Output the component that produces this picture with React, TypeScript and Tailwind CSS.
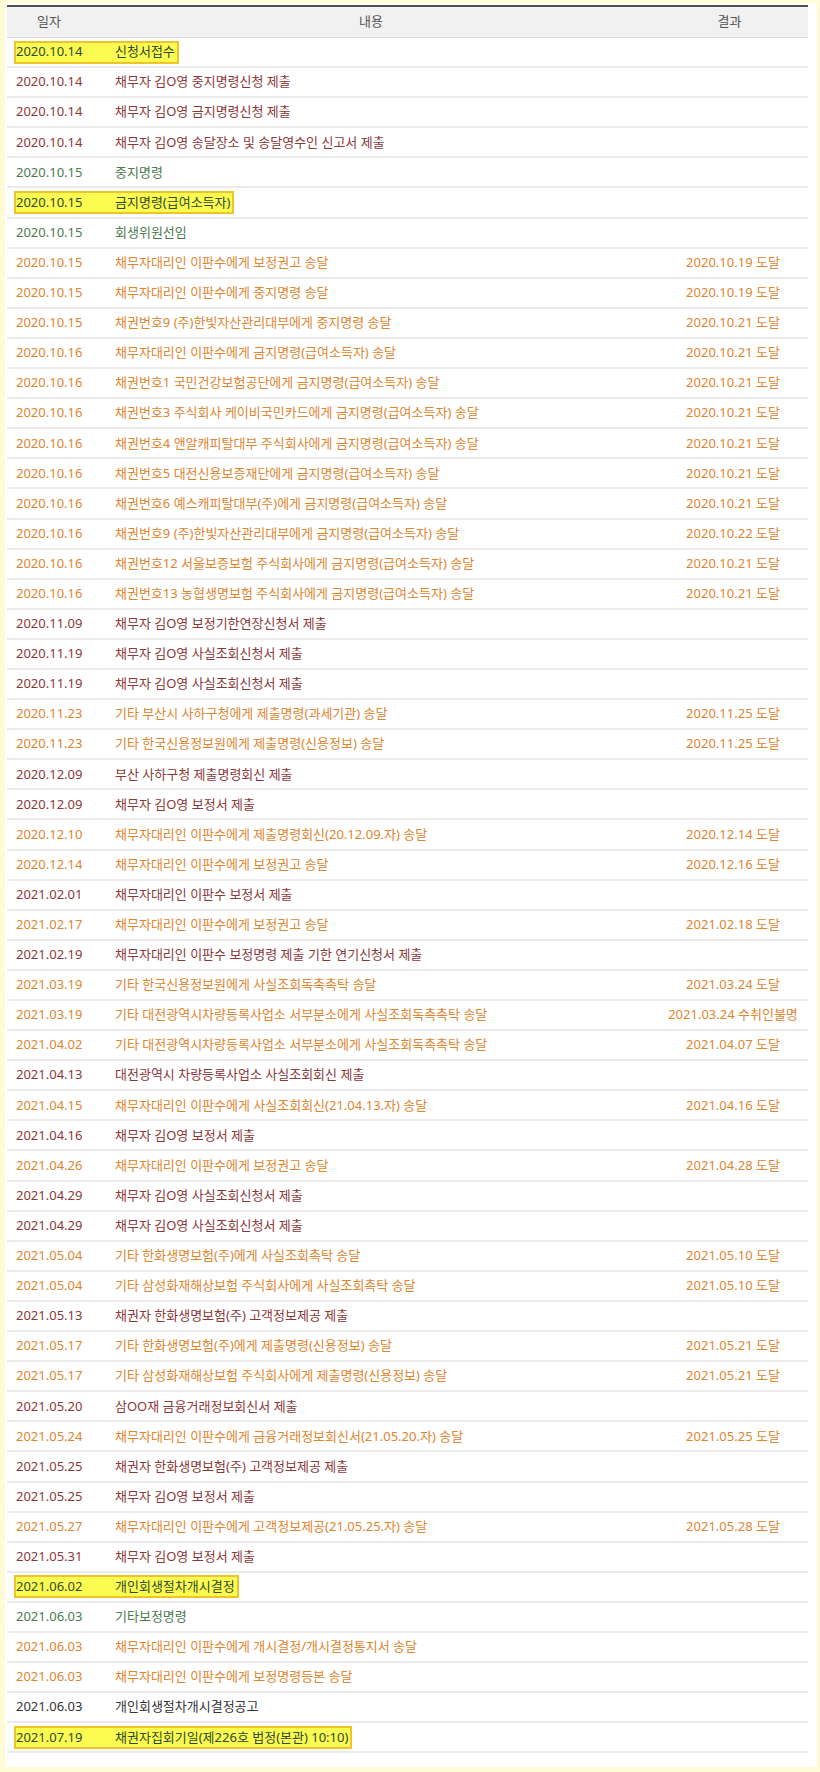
import React from 'react';

type Kind = 'hl' | 'red' | 'green' | 'orange' | 'black';

interface Row {
  date: string;
  text: string;
  kind: Kind;
  result?: string;
}

const rows: Row[] = [
  { date: '2020.10.14', text: '신청서접수', kind: 'hl' },
  { date: '2020.10.14', text: '채무자 김O영 중지명령신청 제출', kind: 'red' },
  { date: '2020.10.14', text: '채무자 김O영 금지명령신청 제출', kind: 'red' },
  { date: '2020.10.14', text: '채무자 김O영 송달장소 및 송달영수인 신고서 제출', kind: 'red' },
  { date: '2020.10.15', text: '중지명령', kind: 'green' },
  { date: '2020.10.15', text: '금지명령(급여소득자)', kind: 'hl' },
  { date: '2020.10.15', text: '회생위원선임', kind: 'green' },
  { date: '2020.10.15', text: '채무자대리인 이판수에게 보정권고 송달', kind: 'orange', result: '2020.10.19 도달' },
  { date: '2020.10.15', text: '채무자대리인 이판수에게 중지명령 송달', kind: 'orange', result: '2020.10.19 도달' },
  { date: '2020.10.15', text: '채권번호9 (주)한빛자산관리대부에게 중지명령 송달', kind: 'orange', result: '2020.10.21 도달' },
  { date: '2020.10.16', text: '채무자대리인 이판수에게 금지명령(급여소득자) 송달', kind: 'orange', result: '2020.10.21 도달' },
  { date: '2020.10.16', text: '채권번호1 국민건강보험공단에게 금지명령(급여소득자) 송달', kind: 'orange', result: '2020.10.21 도달' },
  { date: '2020.10.16', text: '채권번호3 주식회사 케이비국민카드에게 금지명령(급여소득자) 송달', kind: 'orange', result: '2020.10.21 도달' },
  { date: '2020.10.16', text: '채권번호4 앤알캐피탈대부 주식회사에게 금지명령(급여소득자) 송달', kind: 'orange', result: '2020.10.21 도달' },
  { date: '2020.10.16', text: '채권번호5 대전신용보증재단에게 금지명령(급여소득자) 송달', kind: 'orange', result: '2020.10.21 도달' },
  { date: '2020.10.16', text: '채권번호6 예스캐피탈대부(주)에게 금지명령(급여소득자) 송달', kind: 'orange', result: '2020.10.21 도달' },
  { date: '2020.10.16', text: '채권번호9 (주)한빛자산관리대부에게 금지명령(급여소득자) 송달', kind: 'orange', result: '2020.10.22 도달' },
  { date: '2020.10.16', text: '채권번호12 서울보증보험 주식회사에게 금지명령(급여소득자) 송달', kind: 'orange', result: '2020.10.21 도달' },
  { date: '2020.10.16', text: '채권번호13 농협생명보험 주식회사에게 금지명령(급여소득자) 송달', kind: 'orange', result: '2020.10.21 도달' },
  { date: '2020.11.09', text: '채무자 김O영 보정기한연장신청서 제출', kind: 'red' },
  { date: '2020.11.19', text: '채무자 김O영 사실조회신청서 제출', kind: 'red' },
  { date: '2020.11.19', text: '채무자 김O영 사실조회신청서 제출', kind: 'red' },
  { date: '2020.11.23', text: '기타 부산시 사하구청에게 제출명령(과세기관) 송달', kind: 'orange', result: '2020.11.25 도달' },
  { date: '2020.11.23', text: '기타 한국신용정보원에게 제출명령(신용정보) 송달', kind: 'orange', result: '2020.11.25 도달' },
  { date: '2020.12.09', text: '부산 사하구청 제출명령회신 제출', kind: 'red' },
  { date: '2020.12.09', text: '채무자 김O영 보정서 제출', kind: 'red' },
  { date: '2020.12.10', text: '채무자대리인 이판수에게 제출명령회신(20.12.09.자) 송달', kind: 'orange', result: '2020.12.14 도달' },
  { date: '2020.12.14', text: '채무자대리인 이판수에게 보정권고 송달', kind: 'orange', result: '2020.12.16 도달' },
  { date: '2021.02.01', text: '채무자대리인 이판수 보정서 제출', kind: 'red' },
  { date: '2021.02.17', text: '채무자대리인 이판수에게 보정권고 송달', kind: 'orange', result: '2021.02.18 도달' },
  { date: '2021.02.19', text: '채무자대리인 이판수 보정명령 제출 기한 연기신청서 제출', kind: 'red' },
  { date: '2021.03.19', text: '기타 한국신용정보원에게 사실조회독촉촉탁 송달', kind: 'orange', result: '2021.03.24 도달' },
  { date: '2021.03.19', text: '기타 대전광역시차량등록사업소 서부분소에게 사실조회독촉촉탁 송달', kind: 'orange', result: '2021.03.24 수취인불명' },
  { date: '2021.04.02', text: '기타 대전광역시차량등록사업소 서부분소에게 사실조회독촉촉탁 송달', kind: 'orange', result: '2021.04.07 도달' },
  { date: '2021.04.13', text: '대전광역시 차량등록사업소 사실조회회신 제출', kind: 'red' },
  { date: '2021.04.15', text: '채무자대리인 이판수에게 사실조회회신(21.04.13.자) 송달', kind: 'orange', result: '2021.04.16 도달' },
  { date: '2021.04.16', text: '채무자 김O영 보정서 제출', kind: 'red' },
  { date: '2021.04.26', text: '채무자대리인 이판수에게 보정권고 송달', kind: 'orange', result: '2021.04.28 도달' },
  { date: '2021.04.29', text: '채무자 김O영 사실조회신청서 제출', kind: 'red' },
  { date: '2021.04.29', text: '채무자 김O영 사실조회신청서 제출', kind: 'red' },
  { date: '2021.05.04', text: '기타 한화생명보험(주)에게 사실조회촉탁 송달', kind: 'orange', result: '2021.05.10 도달' },
  { date: '2021.05.04', text: '기타 삼성화재해상보험 주식회사에게 사실조회촉탁 송달', kind: 'orange', result: '2021.05.10 도달' },
  { date: '2021.05.13', text: '채권자 한화생명보험(주) 고객정보제공 제출', kind: 'red' },
  { date: '2021.05.17', text: '기타 한화생명보험(주)에게 제출명령(신용정보) 송달', kind: 'orange', result: '2021.05.21 도달' },
  { date: '2021.05.17', text: '기타 삼성화재해상보험 주식회사에게 제출명령(신용정보) 송달', kind: 'orange', result: '2021.05.21 도달' },
  { date: '2021.05.20', text: '삼OO재 금융거래정보회신서 제출', kind: 'red' },
  { date: '2021.05.24', text: '채무자대리인 이판수에게 금융거래정보회신서(21.05.20.자) 송달', kind: 'orange', result: '2021.05.25 도달' },
  { date: '2021.05.25', text: '채권자 한화생명보험(주) 고객정보제공 제출', kind: 'red' },
  { date: '2021.05.25', text: '채무자 김O영 보정서 제출', kind: 'red' },
  { date: '2021.05.27', text: '채무자대리인 이판수에게 고객정보제공(21.05.25.자) 송달', kind: 'orange', result: '2021.05.28 도달' },
  { date: '2021.05.31', text: '채무자 김O영 보정서 제출', kind: 'red' },
  { date: '2021.06.02', text: '개인회생절차개시결정', kind: 'hl' },
  { date: '2021.06.03', text: '기타보정명령', kind: 'green' },
  { date: '2021.06.03', text: '채무자대리인 이판수에게 개시결정/개시결정통지서 송달', kind: 'orange' },
  { date: '2021.06.03', text: '채무자대리인 이판수에게 보정명령등본 송달', kind: 'orange' },
  { date: '2021.06.03', text: '개인회생절차개시결정공고', kind: 'black' },
  { date: '2021.07.19', text: '채권자집회기일(제226호 법정(본관) 10:10)', kind: 'hl' },
];

const textColor: Record<Kind, string> = {
  hl: 'text-[#2f4a2c]',
  red: 'text-[#8b3838]',
  green: 'text-[#4b7b4f]',
  orange: 'text-[#de8530]',
  black: 'text-[#333333]',
};

const App: React.FC = () => {
  return (
    <div className="min-h-screen bg-[#fffbd4] pt-[3px] pl-[5px] pr-[3px] pb-[5px] font-['Noto_Sans','Noto_Sans_CJK_KR',sans-serif] text-[13px]">
      <div className="bg-white pt-[2px] pl-[2px] pr-[9px] pb-[14px]">
        {/* header */}
        <div className="flex h-[33px] items-center border-t-2 border-b border-t-[#505050] border-b-[#dcdcdc] bg-[#f1f1f1] text-[#555]">
          <div className="w-[84px] text-center">일자</div>
          <div className="flex-1 text-center">내용</div>
          <div className="w-[157px] text-center">결과</div>
        </div>
        {rows.map((row, i) => (
          <div
            key={i}
            className={`flex h-[30.1px] items-center border-b-2 border-[#ebebeb] ${textColor[row.kind]}`}
          >
            <div className="pl-[7px]">
              <div
                className={
                  row.kind === 'hl'
                    ? 'flex h-[23px] items-center border-2 border-[#efc42a] bg-[#fbfb52] pr-[2px]'
                    : 'flex h-[23px] items-center border-2 border-transparent pr-[2px]'
                }
              >
                <span className="w-[99px] whitespace-nowrap">{row.date}</span>
                <span className="whitespace-nowrap">{row.text}</span>
              </div>
            </div>
            <div className="flex-1" />
            <div className="w-[150px] whitespace-nowrap text-center">{row.result}</div>
          </div>
        ))}
      </div>
    </div>
  );
};

export default App;
